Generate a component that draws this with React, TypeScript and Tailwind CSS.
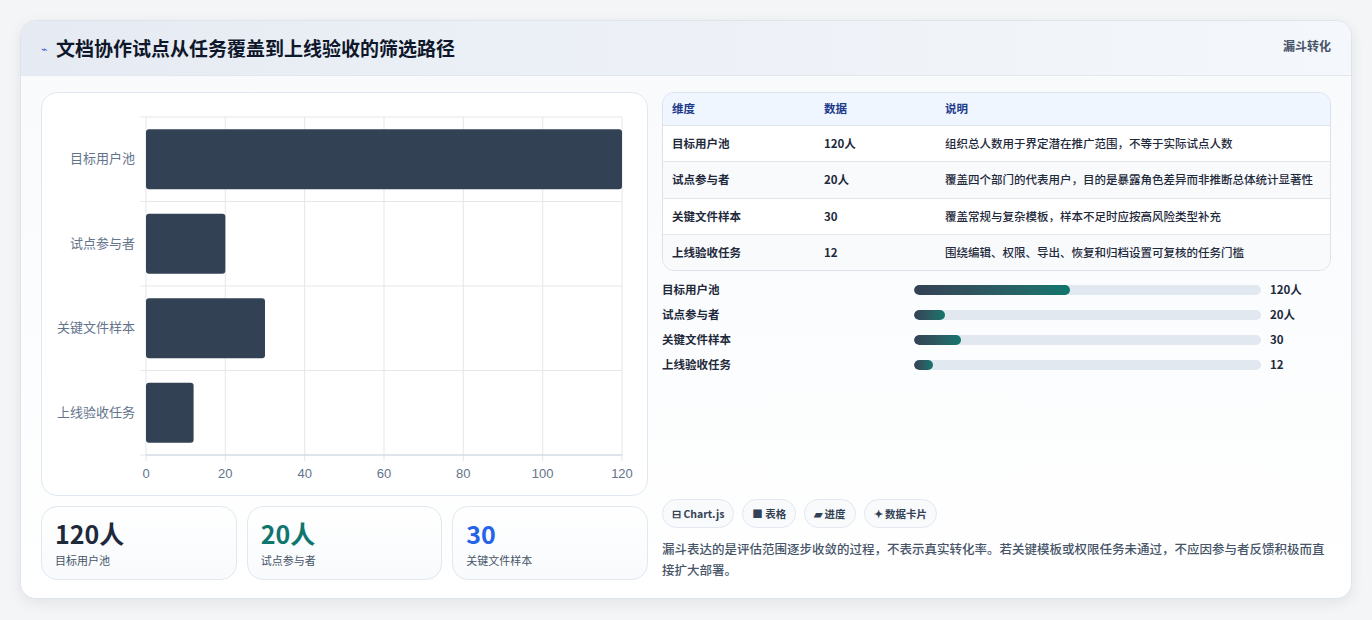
import React from "react";

const cats = [
  { n: "目标用户池", v: 120, d: "120人", desc: "组织总人数用于界定潜在推广范围，不等于实际试点人数", p: 45 },
  { n: "试点参与者", v: 20, d: "20人", desc: "覆盖四个部门的代表用户，目的是暴露角色差异而非推断总体统计显著性", p: 9 },
  { n: "关键文件样本", v: 30, d: "30", desc: "覆盖常规与复杂模板，样本不足时应按高风险类型补充", p: 13.5 },
  { n: "上线验收任务", v: 12, d: "12", desc: "围绕编辑、权限、导出、恢复和归档设置可复核的任务门槛", p: 5.5 },
];

function Chart() {
  const W = 607, H = 404;
  const x0 = 104, x1 = 580, y0 = 24, y1 = 362;
  const band = (y1 - y0) / 4;
  const sx = (v: number) => x0 + ((x1 - x0) * v) / 120;
  return (
    <svg width={W - 2} height={H - 2} style={{ fontFamily: "'Noto Sans CJK SC', sans-serif" }}>
      {[0, 20, 40, 60, 80, 100, 120].map((t) => (
        <g key={t}>
          <line x1={sx(t)} x2={sx(t)} y1={y0} y2={y1 + 6} stroke="#e5e7eb" />
          <text x={sx(t)} y={y1 + 23} fontSize="13" fill="#64748b" textAnchor="middle" fontFamily="'Liberation Sans', sans-serif">{t}</text>
        </g>
      ))}
      {[0, 1, 2, 3, 4].map((i) => (
        <line key={i} x1={x0 - 6} x2={x1} y1={y0 + band * i} y2={y0 + band * i} stroke="#e5e7eb" />
      ))}
      <line x1={x0} x2={x1} y1={y1} y2={y1} stroke="#cbd5e1" />
      {cats.map((c, i) => {
        const cy = y0 + band * i + band / 2;
        return (
          <g key={c.n}>
            <rect x={x0} y={cy - 30} width={sx(c.v) - x0} height={60} rx="3" fill="#334155" />
            <text x={x0 - 11} y={cy + 4} fontSize="13" fill="#64748b" textAnchor="end">{c.n}</text>
          </g>
        );
      })}
    </svg>
  );
}

export default function App() {
  return (
    <div className="min-h-[620px] bg-[#f4f5f7] p-5 pb-5" style={{ fontFamily: "'Noto Sans CJK SC', 'Noto Sans', sans-serif" }}>
      <div className="rounded-2xl bg-white border border-[#dfe3ea] shadow-[0_4px_14px_rgba(15,23,42,0.08)] overflow-hidden">
        <div className="h-[55px] flex items-center justify-between px-5 bg-gradient-to-r from-[#e6ebf3] to-[#f4f7fb] border-b border-[#e2e8f0]">
          <div className="flex items-center gap-2">
            <span className="text-[#3b5bdb] text-[11px]">⌁</span>
            <span className="text-[19px] font-bold text-[#0f172a]">文档协作试点从任务覆盖到上线验收的筛选路径</span>
          </div>
          <span className="text-[12px] font-bold text-[#475569] self-start mt-4">漏斗转化</span>
        </div>
        <div className="flex gap-[14px] px-5 pt-4 pb-[18px] bg-gradient-to-b from-[#f8fafc] to-white">
          <div className="w-[607px] flex flex-col gap-[10px]">
            <div className="h-[404px] rounded-2xl border border-[#e2e8f0] bg-white">
              <Chart />
            </div>
            <div className="grid grid-cols-3 gap-[10px]">
              {[
                ["120人", "目标用户池", "text-[#1e293b]"],
                ["20人", "试点参与者", "text-[#0f766e]"],
                ["30", "关键文件样本", "text-[#2563eb]"],
              ].map(([v, l, c]) => (
                <div key={l} className="h-[74px] rounded-2xl border border-[#e2e8f0] bg-gradient-to-b from-white to-[#f8fafc] px-[13px] pt-[9px]">
                  <div className={`text-[25px] font-bold leading-[34px] ${c}`}>{v}</div>
                  <div className="text-[11px] text-[#475569] mt-[2px]">{l}</div>
                </div>
              ))}
            </div>
          </div>
          <div className="flex-1 flex flex-col">
            <div className="rounded-xl border border-[#dbe2ea] overflow-hidden text-[11.5px] text-[#1e293b]">
              <div className="flex bg-[#eff6ff] h-[33px] items-center font-bold text-[#1e3a8a] border-b border-[#dbe2ea]">
                <div className="w-[161px] pl-[9px]">维度</div>
                <div className="w-[121px]">数据</div>
                <div className="flex-1">说明</div>
              </div>
              {cats.map((c, i) => (
                <div key={c.n} className={`flex py-[9px] ${i < 3 ? "border-b border-[#e2e8f0]" : ""} ${i % 2 ? "bg-[#f8fafc]" : "bg-white"}`}>
                  <div className="w-[161px] pl-[9px] font-bold">{c.n}</div>
                  <div className="w-[121px] font-bold">{c.d}</div>
                  <div className="flex-1 pr-4 leading-[17px] font-medium">{c.desc}</div>
                </div>
              ))}
            </div>
            <div className="mt-[11px] flex flex-col gap-[9px]">
              {cats.map((c) => (
                <div key={c.n} className="flex items-center h-4 text-[11.5px] font-bold text-[#1e293b]">
                  <div className="w-[252px]">{c.n}</div>
                  <div className="w-[347px] h-[10px] rounded-full bg-[#e2e8f0] overflow-hidden">
                    <div className="h-full rounded-full bg-gradient-to-r from-[#334155] to-[#0f766e]" style={{ width: `${c.p}%` }} />
                  </div>
                  <div className="ml-[9px]">{c.d}</div>
                </div>
              ))}
            </div>
            <div className="flex-1" />
            <div className="flex gap-[8px]">
              {["⊟ Chart.js", "■ 表格", "▰ 进度", "✦ 数据卡片"].map((t) => (
                <span key={t} className="h-[29px] px-[9px] flex items-center rounded-full border border-[#e2e8f0] bg-[#f8fafc] text-[10.5px] font-bold text-[#334155]">{t}</span>
              ))}
            </div>
            <p className="mt-[10px] text-[12.5px] leading-[21px] text-[#475569] font-medium">漏斗表达的是评估范围逐步收敛的过程，不表示真实转化率。若关键模板或权限任务未通过，不应因参与者反馈积极而直接扩大部署。</p>
          </div>
        </div>
      </div>
    </div>
  );
}
